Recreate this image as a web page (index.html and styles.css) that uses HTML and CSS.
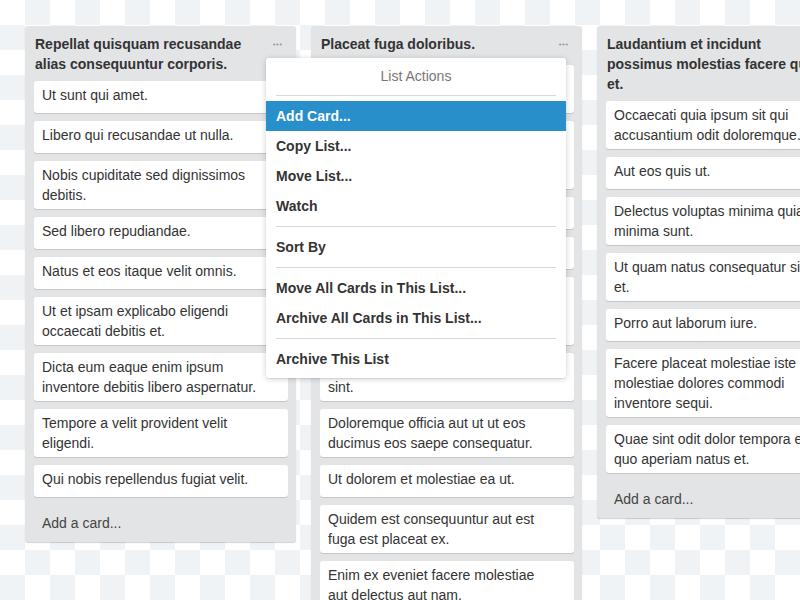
FILE: index.html
```html
<!DOCTYPE html>
<html lang="en">
<head>
<meta charset="utf-8">
<title>Board</title>
<link rel="stylesheet" href="styles.css">
</head>
<body>
<div class="board">
  <section class="list">
    <header class="list-header">
      <h2 class="list-title">Repellat quisquam recusandae alias consequuntur corporis.</h2>
      <span class="list-menu-btn"><svg width="9" height="3" viewBox="0 0 9 3"><circle cx="1.2" cy="1.5" r="1.1"/><circle cx="4.5" cy="1.5" r="1.1"/><circle cx="7.8" cy="1.5" r="1.1"/></svg></span>
    </header>
    <div class="cards">
      <div class="card"><p>Ut sunt qui amet.</p></div>
      <div class="card"><p>Libero qui recusandae ut nulla.</p></div>
      <div class="card"><p>Nobis cupiditate sed dignissimos debitis.</p></div>
      <div class="card"><p>Sed libero repudiandae.</p></div>
      <div class="card"><p>Natus et eos itaque velit omnis.</p></div>
      <div class="card"><p>Ut et ipsam explicabo eligendi occaecati debitis et.</p></div>
      <div class="card"><p>Dicta eum eaque enim ipsum inventore debitis libero aspernatur.</p></div>
      <div class="card"><p>Tempore a velit provident velit eligendi.</p></div>
      <div class="card"><p>Qui nobis repellendus fugiat velit.</p></div>
      <div class="add-card">Add a card...</div>
    </div>
  </section>

  <section class="list">
    <header class="list-header">
      <h2 class="list-title">Placeat fuga doloribus.</h2>
      <span class="list-menu-btn"><svg width="9" height="3" viewBox="0 0 9 3"><circle cx="1.2" cy="1.5" r="1.1"/><circle cx="4.5" cy="1.5" r="1.1"/><circle cx="7.8" cy="1.5" r="1.1"/></svg></span>
    </header>
    <div class="cards">
      <div class="card"><p>Et voluptatem eius quia eos ipsa dolores nihil.</p></div>
      <div class="card"><p>Consequatur ipsam voluptates odit ut ea quia et magnam voluptas quasi doloribus est.</p></div>
      <div class="card"><p>Sit ut et aut.</p></div>
      <div class="card"><p>Omnis dolor ut velit.</p></div>
      <div class="card"><p>Modi quo rerum aspernatur nisi rerum sit dolorem laborum ipsam eum dicta est.</p></div>
      <div class="card"><p>Ratione accusamus voluptatibus sint.</p></div>
      <div class="card"><p>Doloremque officia aut ut ut eos ducimus eos saepe consequatur.</p></div>
      <div class="card"><p>Ut dolorem et molestiae ea ut.</p></div>
      <div class="card"><p>Quidem est consequuntur aut est fuga est placeat ex.</p></div>
      <div class="card"><p>Enim ex eveniet facere molestiae aut delectus aut nam.</p></div>
      <div class="add-card">Add a card...</div>
    </div>
  </section>

  <section class="list">
    <header class="list-header">
      <h2 class="list-title">Laudantium et incidunt possimus molestias facere qui et.</h2>
      <span class="list-menu-btn"><svg width="9" height="3" viewBox="0 0 9 3"><circle cx="1.2" cy="1.5" r="1.1"/><circle cx="4.5" cy="1.5" r="1.1"/><circle cx="7.8" cy="1.5" r="1.1"/></svg></span>
    </header>
    <div class="cards">
      <div class="card"><p>Occaecati quia ipsum sit qui accusantium odit doloremque.</p></div>
      <div class="card"><p>Aut eos quis ut.</p></div>
      <div class="card"><p>Delectus voluptas minima quia minima sunt.</p></div>
      <div class="card"><p>Ut quam natus consequatur sit ut et.</p></div>
      <div class="card"><p>Porro aut laborum iure.</p></div>
      <div class="card"><p>Facere placeat molestiae iste molestiae dolores commodi inventore sequi.</p></div>
      <div class="card"><p>Quae sint odit dolor tempora est quo aperiam natus et.</p></div>
      <div class="add-card">Add a card...</div>
    </div>
  </section>

  <div class="pop-over">
    <div class="pop-title">List Actions</div>
    <ul class="pop-list">
      <li class="pop-item is-active">Add Card...</li>
      <li class="pop-item">Copy List...</li>
      <li class="pop-item">Move List...</li>
      <li class="pop-item">Watch</li>
    </ul>
    <hr class="pop-sep">
    <ul class="pop-list">
      <li class="pop-item">Sort By</li>
    </ul>
    <hr class="pop-sep">
    <ul class="pop-list">
      <li class="pop-item">Move All Cards in This List...</li>
      <li class="pop-item">Archive All Cards in This List...</li>
    </ul>
    <hr class="pop-sep">
    <ul class="pop-list">
      <li class="pop-item">Archive This List</li>
    </ul>
  </div>
</div>
</body>
</html>
```

FILE: styles.css
```css
html, body {
  margin: 0;
  padding: 0;
  width: 800px;
  height: 600px;
  overflow: hidden;
}

body {
  font-family: "Liberation Sans", Arial, sans-serif;
  font-size: 14px;
  line-height: 20px;
  color: #333;
  background-color: #fff;
  background-image: repeating-conic-gradient(#eff3f6 0 25%, #ffffff 0 50%);
  background-size: 50px 50px;
  background-position: 0 0;
}

.board {
  position: relative;
  display: flex;
  align-items: flex-start;
  gap: 15px;
  padding: 26px 0 0 25px;
  height: 600px;
  box-sizing: border-box;
  overflow: hidden;
}

.list {
  flex: 0 0 271px;
  width: 271px;
  background: #e2e4e6;
  border-radius: 3px;
  box-shadow: 0 1px 1px rgba(0, 0, 0, 0.18);
}

.list-header {
  display: flex;
  align-items: flex-start;
  padding: 8px 0 7px 10px;
}

.list-title {
  flex: 1;
  margin: 0;
  min-height: 24px;
  font-size: 14px;
  line-height: 20px;
  font-weight: bold;
  color: #333;
}

.list-menu-btn {
  flex: 0 0 50px;
  height: 20px;
  display: flex;
  align-items: center;
  justify-content: flex-end;
  padding-right: 14px;
  box-sizing: border-box;
}

.list-menu-btn svg {
  fill: #999;
  display: block;
}

.cards {
  padding: 0 8px 1px 9px;
}

.card {
  background: #fff;
  border-radius: 3px;
  box-shadow: 0 1px 0 #c4c6c8;
  margin-bottom: 8px;
  padding: 4px 24px 4px 8px;
}

.card p {
  margin: 0;
  min-height: 24px;
  color: #333;
}

.add-card {
  padding: 8px 8px 8px 8px;
  color: #444;
}

.pop-over {
  position: absolute;
  left: 266px;
  top: 58px;
  width: 300px;
  background: #fff;
  border-radius: 3px;
  box-shadow: 0 1px 6px rgba(0, 0, 0, 0.18), 0 1px 1px rgba(0, 0, 0, 0.08);
  padding-bottom: 4px;
}

.pop-title {
  height: 37px;
  line-height: 37px;
  margin: 0 10px;
  text-align: center;
  color: #777;
  border-bottom: 1px solid #d6dadc;
}

.pop-list {
  list-style: none;
  margin: 5px 0 0;
  padding: 0;
}

.pop-item {
  height: 30px;
  line-height: 30px;
  padding: 0 10px;
  font-weight: bold;
  color: #333;
}

.pop-item.is-active {
  background: #298fca;
  color: #fff;
}

.pop-sep {
  margin: 5px 10px 0;
  border: 0;
  border-top: 1px solid #d6dadc;
  height: 0;
}
```
